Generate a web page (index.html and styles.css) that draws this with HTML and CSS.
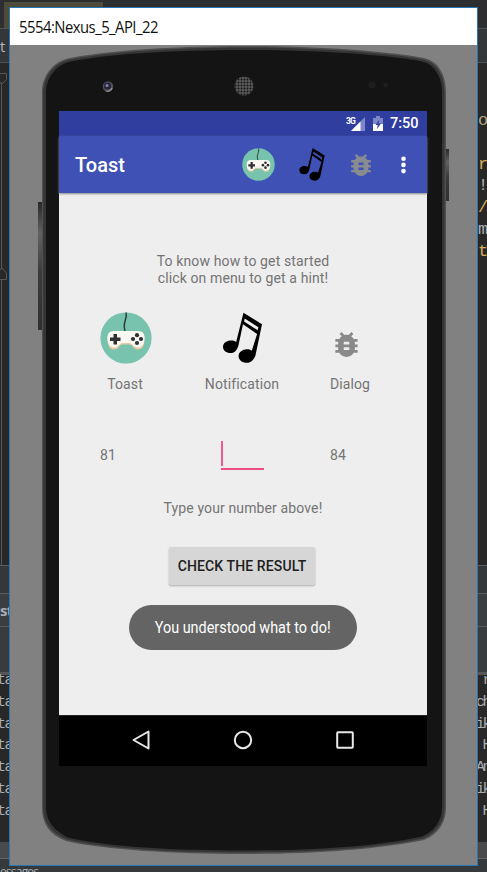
FILE: index.html
```html
<!DOCTYPE html>
<html lang="en">
<head>
<meta charset="utf-8">
<title>5554:Nexus_5_API_22</title>
<link rel="stylesheet" href="styles.css">
</head>
<body>
<svg class="defs" width="0" height="0" aria-hidden="true">
  <symbol id="gamepad" viewBox="0 0 52 52">
    <circle cx="26" cy="26" r="25.6" fill="#77c3ae"/>
    <path d="M26 .5C28 7 22 10 25 19" fill="none" stroke="#2b3b3b" stroke-width="1.5"/>
    <path d="M14 20.500h24c5 0 7 3 6.500 8-.5 7-3 9-7 9-4 0-5-5-8-5h-7c-3 0-4 5-8 5s-6.500-2-7-9c-.5-5 1.500-8 6.500-8z" fill="#e9c9a4"/>
    <path d="M14 19h24c5 0 7 3 6.500 8-.5 6-3 8.500-7 8.500-4 0-5-4.500-8-4.500h-7c-3 0-4 4.500-8 4.500s-6.500-2.500-7-8.500c-.5-5 1.500-8 6.500-8z" fill="#f8f8f3"/>
    <path d="M13.500 22h3.500v3.500h3.500V29H17v3.500h-3.500V29H10v-3.500h3.500z" fill="#303033"/>
    <g fill="#303033"><circle cx="37" cy="23.200" r="2.100"/><circle cx="37" cy="31" r="2.100"/><circle cx="33" cy="27" r="2.100"/><circle cx="41" cy="27" r="2.100"/></g>
  </symbol>
  <symbol id="notes" viewBox="0 0 40 52">
    <path fill-rule="evenodd" d="M21 0 40 12 33.500 43C32.500 48 28.500 51.500 24.500 51.500c-5 0-8.500-3-8.500-7 0-4 4-7 8.500-7 2 0 3.500.5 5 1.500l5.500-17L20.500 12 16 33C15 38 12 41.500 8 41.500c-5 0-8-3-8-6.500 0-4 4-6.500 8-6.500 2.500 0 4 .5 5.500 1.500zM22.300 6l-.7 3L35.500 18l.8-3z"/>
  </symbol>
  <symbol id="bug" viewBox="4 3 16 18">
    <path d="M20 8h-2.810c-.45-.78-1.070-1.450-1.820-1.960L17 4.410 15.590 3l-2.170 2.170C12.960 5.060 12.490 5 12 5c-.49 0-.96.06-1.410.17L8.410 3 7 4.410l1.620 1.630C7.880 6.550 7.260 7.220 6.810 8H4v2h2.090c-.05.33-.09.66-.09 1v1H4v2h2v1c0 .34.040.67.090 1H4v2h2.810c1.040 1.790 2.970 3 5.190 3s4.150-1.210 5.190-3H20v-2h-2.090c.05-.33.09-.66.09-1v-1h2v-2h-2v-1c0-.34-.04-.67-.09-1H20V8zm-6 8h-4v-2h4v2zm0-4h-4v-2h4v2z"/>
  </symbol>
</svg>

<div class="desktop">
  <div class="ide">
    <div class="tabs"><div class="tab"></div></div>
    <div class="crumbs">t</div>
    <div class="editor">
      <svg class="gutter" width="9" height="502"><path d="M0 10.500h6.500v6L3 20H0M1.500 20v186M1.500 217v285M0 207l2-2 4.500 5v6.500H0" fill="none" stroke="#55585a"/></svg>
      <div class="code"><span class="pale">o</span><span></span><span class="gold">r</span><span>!</span><span class="gold">/</span><span>m</span><span class="gold">t</span></div>
    </div>
    <div class="split"></div>
    <div class="tool">st</div>
    <div class="toolbar"></div>
    <div class="console">
      <pre>ta
ta
ta
ta
ta
ta
ta</pre>
      <pre class="out"> r
ch
ik
 H
An
ik
 H</pre>
    </div>
    <div class="scroll"></div>
    <div class="status">essages</div>
  </div>

  <main class="window">
    <header class="title"><span>5554:Nexus_5_API_22</span></header>
    <div class="stage">
      <svg class="device" width="467" height="820" viewBox="10 45 467 820">
        <defs>
          <linearGradient id="key" x1="0" y1="0" x2="0" y2="1"><stop offset="0" stop-color="#292929"/><stop offset=".25" stop-color="#626262"/><stop offset=".55" stop-color="#3b3b3b"/><stop offset="1" stop-color="#303030"/></linearGradient>
          <pattern id="mesh" width="3" height="3" patternUnits="userSpaceOnUse"><rect width="3" height="3" fill="#5a5a5a"/><circle cx="1.500" cy="1.500" r="1" fill="#151515"/></pattern>
        </defs>
        <rect x="38" y="202" width="5" height="128" fill="url(#key)"/>
        <rect x="445" y="149" width="4" height="52" fill="url(#key)"/>
        <path d="M42 92C42 76 53 61 70 58 110 50 180 46 243 46S380 50 424 58C439 61 446 76 446 92V807C446 825 436 835 424 840 375 850 310 854 243 854S105 850 66 841C50 835 42 825 42 807Z" fill="#505050"/>
        <path d="M43.200 92C43.500 77 54 62.500 70 59.500 110 51.500 180 47.500 243 47.500S380 51.500 423 59.500C437.500 62.500 444.500 77 444.500 92V807C444.500 824 435 833.500 423 838.500 374 849 310 852.500 243 852.500S106 849 67 839.500C52 833 43.200 824 43.200 807Z" fill="#353535"/>
        <path d="M46 92C46 78 56 64.500 71 61.500 111 53.500 180 50 243 50S380 53.500 422 61.500C435 64.500 442 78 442 92V807C442 822 433 832 422 836.500 374 847 310 850.500 243 850.500S107 847 68 837.500C55 831 46 822 46 807Z" fill="#141414"/>
        <circle cx="108" cy="86.500" r="5.300" fill="#50505a"/><circle cx="107.500" cy="86" r="3.500" fill="#24243d"/><circle cx="107" cy="85.500" r="1.500" fill="#8686a3"/><path d="M106 91a5 5 0 0 0 6-3" fill="none" stroke="#96969c" stroke-width="1.200"/>
        <circle cx="244" cy="86" r="9.500" fill="url(#mesh)"/>
        <circle cx="372" cy="85" r="3.500" fill="#1d1d1d"/><circle cx="385.500" cy="85" r="2.500" fill="#1d1d1d"/>
      </svg>

      <div class="screen">
        <div class="sysbar">
          <svg width="19" height="16" viewBox="0 0 19 16"><path d="M19 1v14H5z" fill="#7d87c9"/><path d="M14.500 5.500V15H5z" fill="#fff"/><text x="0" y="7.500" class="net">3G</text></svg>
          <svg class="battery" width="10" height="15" viewBox="0 0 10 15"><path d="M3 0h4v2h3v13H0V2h3z" fill="#7d87c9"/><path d="M0 8h10v7H0z" fill="#fff"/><path d="m6.500 3.500-4 5.500h2.200L4 13l4-5.500H5.500z" fill="#303f9f"/></svg>
          <span class="clock">7:50</span>
        </div>
        <div class="appbar">
          <h1>Toast</h1>
          <svg class="act-pad"><use href="#gamepad"/></svg>
          <svg class="act-notes"><use href="#notes"/></svg>
          <svg class="act-bug"><use href="#bug"/></svg>
          <svg class="act-more" viewBox="0 0 5 18"><circle cx="2.500" cy="2.700" r="2.300"/><circle cx="2.500" cy="8.900" r="2.300"/><circle cx="2.500" cy="15.100" r="2.300"/></svg>
        </div>
        <div class="content">
          <p class="intro">To know how to get started<br>click on menu to get a hint!</p>
          <div class="choices">
            <div class="choice"><svg class="big-pad"><use href="#gamepad"/></svg><span>Toast</span></div>
            <div class="choice"><svg class="big-notes"><use href="#notes"/></svg><span>Notification</span></div>
            <div class="choice"><svg class="big-bug"><use href="#bug"/></svg><span>Dialog</span></div>
          </div>
          <div class="numbers"><span>81</span><div class="field"><i></i></div><span>84</span></div>
          <p class="hint">Type your number above!</p>
          <button class="check">CHECK THE RESULT</button>
          <div class="toast"><span>You understood what to do!</span></div>
        </div>
        <nav class="nav">
          <svg width="18" height="20" viewBox="0 0 18 20"><path d="M16.500 1.500v17L1.500 10z"/></svg>
          <svg width="20" height="20" viewBox="0 0 20 20"><circle cx="10" cy="10" r="8.200"/></svg>
          <svg width="18" height="18" viewBox="0 0 18 18"><rect x="1.200" y="1.200" width="15.600" height="15.600" rx=".8"/></svg>
        </nav>
      </div>
    </div>
  </main>
</div>
</body>
</html>
```

FILE: styles.css
```css
* { box-sizing: border-box; }
body { margin: 0; overflow: hidden; font-family: Roboto, sans-serif; }
p, h1, pre { margin: 0; }
svg { display: block; flex: none; }
.defs { position: absolute; }

.desktop { position: relative; width: 487px; height: 872px; overflow: hidden; background: #2b2b2b; }
.ide { height: 872px; color: #a9b0b5; }
.tabs { height: 28px; padding: 2px 0 0 4px; background: #2d2e2f; }
.tab { width: 99px; height: 26px; background: #4f4b3a; }
.crumbs { height: 35px; border: solid #505355; border-width: 1px 0; background: #343739; font: 15px/35px "Open Sans", sans-serif; color: #b8b8b8; }
.editor { height: 502px; display: flex; justify-content: space-between; background: #282828; }
.code { width: 9px; padding-top: 47px; display: flex; flex-direction: column; font: 17px/21.800px "Liberation Mono", monospace; }
.code span { height: 21.800px; }
.pale { color: #b5a98b; }
.gold { color: #d5ac59; }
.split { height: 28px; background: #35383a; border-top: 1px solid #5a5d5f; }
.tool { height: 34px; border: solid #5a5d5f; border-width: 1px 0; background: #3b3e40; font: bold 15px/32px "Open Sans", sans-serif; letter-spacing: -.8px; }
.toolbar { height: 48px; background: #393c3e; border-bottom: 3px solid #555759; }
.console { height: 167px; display: flex; justify-content: space-between; background: #282828; }
.console pre { width: 12px; margin-left: -3px; font: 15px/21.800px "Liberation Mono", monospace; letter-spacing: -1.500px; margin-top: -5px; }
.console .out { width: 11px; margin-left: 0; letter-spacing: -2.500px; }
.scroll { height: 17px; background: #484a4b; border-bottom: 1px solid #666; }
.status { height: 13px; padding-top: 7px; overflow: hidden; background: #36393b; font: 12px/12px "Open Sans", sans-serif; letter-spacing: -.8px; }

.window { position: absolute; left: 9px; top: 7px; width: 469px; height: 859px; border: 1px solid #2776b3; background: #818181; }
.title { height: 37px; padding-left: 9px; background: #fff; color: #111; font: 16px/38px "Open Sans", sans-serif; letter-spacing: -.55px; }
.title span { display: inline-block; transform: scaleX(.927); transform-origin: left; }
.stage { position: relative; height: 820px; padding: 66px 0 0 49px; }
.device { position: absolute; left: 0; top: 0; }
.screen { position: relative; width: 368px; height: 655px; display: flex; flex-direction: column; background: #eee; }
.sysbar { height: 25px; display: flex; align-items: center; justify-content: flex-end; padding-right: 9px; background: #303f9f; color: #fff; }
.net { font: bold 8.500px "Roboto", sans-serif; letter-spacing: -.8px; fill: #fff; }
.battery { margin-left: 8px; }
.clock { width: 28px; margin-left: 7px; font-size: 14.500px; font-weight: 500; line-height: 26px; white-space: nowrap; }
.appbar { height: 57px; display: flex; align-items: center; padding-left: 16px; background: #3f51b5; box-shadow: 0 1px 2px #888; }
.appbar h1 { width: 167px; padding-top: 1px; color: #fff; font-size: 20px; font-weight: 500; }
.act-pad { width: 33px; height: 33px; }
.act-notes { width: 26px; height: 33px; margin-left: 24px; }
.act-bug { width: 20px; height: 22px; margin-left: 26px; fill: #888b90; }
.act-more { width: 5px; height: 18px; margin-left: 30px; fill: #fff; }
.content { height: 522px; padding-top: 60px; color: #747474; font-size: 14px; line-height: 17px; letter-spacing: .12px; }
.intro { text-align: center; }
.choices { display: grid; grid-template-columns: 50px 75px 41px; justify-content: space-between; padding: 26px 56px 0 42px; }
.choice { height: 80px; display: flex; flex-direction: column; align-items: center; justify-content: flex-end; white-space: nowrap; }
.choice:first-child span { margin-right: 2px; }
.choice:nth-child(2) { position: relative; left: 1.500px; }
.choice:last-child span { margin-right: 1px; }
.choice span { height: 17px; margin-top: 12px; }
.big-pad { width: 52px; height: 52px; }
.big-notes { width: 39px; height: 52px; }
.big-bug { width: 23px; height: 25px; margin: 0 8px 7px 0; fill: #898989; }
.numbers { display: grid; grid-template-columns: 121px 109px 40px; height: 32px; margin: 46px 0 0 41px; line-height: 33px; }
.field { width: 43px; height: 31px; padding-top: 2px; border-bottom: 2px solid #ef4b80; }
.field i { display: block; width: 2px; height: 25px; background: #ef5b8b; }
.hint { margin-top: 29px; text-align: center; }
.check { display: block; width: 146px; height: 38px; margin: 30px auto 0 110px; padding: 0; border: 0; border-radius: 2px; background: #d6d6d6; box-shadow: 0 1px 2px #aaa; color: #202020; font: 500 14px Roboto, sans-serif; letter-spacing: .12px; white-space: nowrap; }
.toast { width: 228px; height: 45px; margin: 20px 0 0 70px; border-radius: 23px; background: #646464; color: #fff; font-size: 16px; line-height: 46px; text-align: center; letter-spacing: 0; white-space: nowrap; }
.toast span { display: inline-block; transform: scaleX(.9); }
.nav { height: 51px; display: grid; grid-template-columns: repeat(3, 102.300px); justify-content: center; align-items: center; justify-items: center; padding-bottom: 2px; background: #000; border-top: 1px solid #222; }
.nav svg { fill: none; stroke: #e8e8e8; stroke-width: 2; stroke-linejoin: round; }
```
